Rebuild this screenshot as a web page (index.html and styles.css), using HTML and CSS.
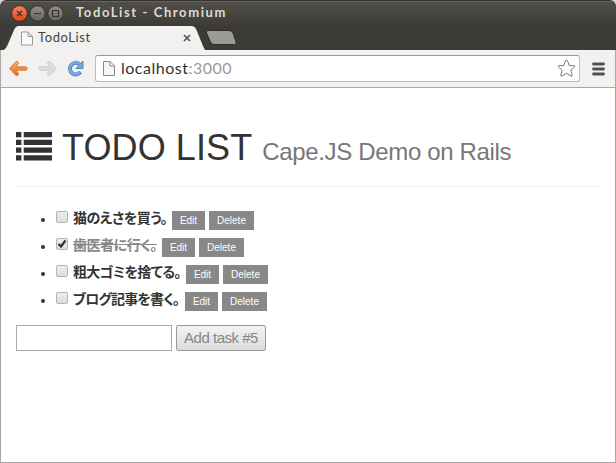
FILE: index.html
```html
<!DOCTYPE html>
<html lang="ja">
<head>
<meta charset="utf-8">
<title>TodoList</title>
<link rel="stylesheet" href="styles.css">
</head>
<body>
<div class="window">
  <header class="frame">
    <div class="titlebar">
      <svg class="controls" width="52" height="18" viewBox="0 0 52 18">
        <defs>
          <linearGradient id="close" x1="0" y1="0" x2="0" y2="1"><stop offset="0" stop-color="#f58560"/><stop offset="1" stop-color="#df4518"/></linearGradient>
          <linearGradient id="grey" x1="0" y1="0" x2="0" y2="1"><stop offset="0" stop-color="#929087"/><stop offset="1" stop-color="#66645d"/></linearGradient>
        </defs>
        <g stroke="#302f2b"><circle cx="8.5" cy="9.500" r="7.900" fill="url(#close)"/><circle cx="26.500" cy="9.500" r="7.700" fill="url(#grey)"/><circle cx="44.500" cy="9.500" r="7.700" fill="url(#grey)"/></g>
        <path d="M6 7l5 5M11 7l-5 5M23 9.500h7M41.500 6.500h6v6h-6z" fill="none" stroke="#36312c" stroke-width="1.200"/>
      </svg>
      <span class="caption">TodoList - Chromium</span>
    </div>
    <div class="tabs">
      <div class="tab">
        <svg class="tab-shape" width="206" height="25" viewBox="0 0 206 25"><path d="M0 25C4 24 5 22 7 18L13 4Q14.500 0 18 0H190Q194 0 195.500 4L202 20Q204 25 206 25Z" fill="#f2f1f0"/></svg>
        <svg class="page-icon" width="12" height="15" viewBox="0 0 12 15"><path d="M.5 1h6.500l4.500 4.500V14H.5zM7 1v4.500h4.500" fill="#fafafa" stroke="#999"/></svg>
        <span class="tab-title">TodoList</span>
        <svg class="tab-close" width="8" height="8" viewBox="0 0 8 8"><path d="M1 1l6 6M7 1L1 7" stroke="#555" stroke-width="1.700"/></svg>
      </div>
      <svg class="new-tab" width="32" height="15" viewBox="0 0 32 15"><path d="M3.500.5H24Q27 .5 28 3L31 12Q31.500 14.500 29.500 14.500H9Q6.500 14.500 5.500 12L1.500 3Q.5.5 3.500.5Z" fill="#9c9b99" stroke="#2d2c28"/></svg>
    </div>
  </header>
  <nav class="toolbar">
    <svg class="nav-icons" width="76" height="20" viewBox="0 0 76 20">
      <defs>
        <linearGradient id="orange" x1="0" y1="0" x2="0" y2="1"><stop offset="0" stop-color="#f9ae68"/><stop offset="1" stop-color="#e46c20"/></linearGradient>
      </defs>
      <path d="M.5 9.500L7 2.500Q9.500 2 9.500 4.500L7 7.800H16.500Q18.200 7.800 18.200 9.500T16.500 11.200H7L9.500 14.500Q9.500 17 7 16.500Z" fill="url(#orange)" stroke="#c9763b" stroke-width=".9"/>
      <path d="M47.500 9.500L41 2.500Q38.500 2 38.500 4.500L41 7.800H31.500Q29.800 7.800 29.800 9.500T31.500 11.200H41L38.500 14.500Q38.500 17 41 16.500Z" fill="#dddcda" stroke="#c9c8c5" stroke-width=".9"/>
      <path d="M70.500 5.200A5.800 5.800 0 1 0 71.500 13" fill="none" stroke="#4f87c4" stroke-width="4"/>
      <path d="M74 2v7.500H67z" fill="#76a9df" stroke="#4f87c4"/>
      <path d="M70.500 5.200A5.800 5.800 0 1 0 71.200 12.700" fill="none" stroke="#79abe0" stroke-width="2.500"/>
    </svg>
    <div class="address">
      <svg class="page-icon" width="12" height="15" viewBox="0 0 12 15"><path d="M.5.5h6.500l4.500 4.500v9.500H.5zM7 .5V5h4.500" fill="#f5f5f5" stroke="#888"/></svg>
      <span class="url">localhost<span class="port">:3000</span></span>
      <svg class="star" width="19" height="19" viewBox="0 0 19 19"><path d="M9.500 1Q10.300 1 10.600 2L12.200 6.500L17 6.700Q18.500 7 17.500 8L13.900 11.200L15.200 16Q15.200 17.700 14 17L9.500 14.300L5 17Q3.800 17.700 3.800 16L5.100 11.200L1.500 8Q.5 7 2 6.700L6.800 6.500L8.400 2Q8.700 1 9.500 1Z" fill="#fff" stroke="#777"/></svg>
    </div>
    <svg class="menu" width="13" height="14" viewBox="0 0 13 14"><path d="M1.500 2h10M1.500 7h10M1.500 12h10" stroke="#505050" stroke-width="2.800" stroke-linecap="round"/></svg>
  </nav>
  <main class="page">
    <h1 class="heading">
      <svg class="list-icon" width="36" height="29" viewBox="0 0 36 29"><path d="M0 0h5.400v5.300H0zM7.700 0H36v5.300H7.700zM0 7.700h5.400v5.300H0zM7.700 7.700H36v5.300H7.700zM0 15.500h5.400v5.300H0zM7.700 15.500H36v5.300H7.700zM0 23.300h5.400v5.300H0zM7.700 23.300H36v5.300H7.700z" fill="#333"/></svg>
      <span class="name">TODO LIST</span>
      <small class="sub">Cape.JS Demo on Rails</small>
    </h1>
    <ul class="tasks">
      <li class="task"><span class="check"></span><span class="label cat">猫のえさを買う。</span><button class="btn">Edit</button><button class="btn delete">Delete</button></li>
      <li class="task"><span class="check"><svg width="12" height="12" viewBox="0 0 12 12"><path d="M2.500 6L5 8.500L9.500 2.500" fill="none" stroke="#333" stroke-width="2.300"/></svg></span><span class="label dentist done"><s class="struck">歯医者に行く。</s></span><button class="btn">Edit</button><button class="btn delete">Delete</button></li>
      <li class="task"><span class="check"></span><span class="label trash">粗大ゴミを捨てる。</span><button class="btn">Edit</button><button class="btn delete">Delete</button></li>
      <li class="task"><span class="check"></span><span class="label blog">ブログ記事を書く。</span><button class="btn">Edit</button><button class="btn delete">Delete</button></li>
    </ul>
    <form class="new-task"><input class="field" type="text"><button class="add" type="button">Add task #5</button></form>
  </main>
</div>
</body>
</html>
```
FILE: styles.css
```css
* { box-sizing: border-box; }
body { margin: 0; background: #d8d8d8; font-family: "Liberation Sans", "Noto Sans CJK JP", sans-serif; }
.window { width: 616px; height: 463px; display: flex; flex-direction: column; overflow: hidden; border-radius: 6px 6px 0 0; background: #fff; }
.frame { height: 50px; background: linear-gradient(#504f49, #3c3b37 26px); border-top: 1px solid #33322e; box-shadow: inset 0 1px #65645e; }
.titlebar { height: 25px; display: flex; padding: 3px 0 0 11px; }
.controls { flex: none; }
.caption { margin-left: 13px; font: bold 13px/17px Lato, sans-serif; letter-spacing: 1.6px; color: #dfdbd2; white-space: nowrap; }
.tabs { display: flex; height: 24px; }
.tab { width: 202px; height: 24px; display: flex; align-items: center; position: relative; padding-left: 21px; }
.tab-shape { position: absolute; left: 1px; top: 0; }
.tab .page-icon, .tab-title, .tab-close { position: relative; }
.tab-title { width: 90px; margin: -2px 0 0 5px; font: 13px/20px Lato, sans-serif; letter-spacing: .6px; color: #444; }
.tab-close { margin-left: 55px; }
.new-tab { margin: 4px 0 0 3px; position: relative; }
.toolbar { height: 38px; flex: none; display: flex; align-items: center; padding-left: 8px; background: #f2f1f0; border: 1px solid #aaa9a7; border-width: 0 1px 1px; }
.nav-icons { flex: none; }
.address { width: 485px; height: 27px; margin-left: 10px; display: flex; align-items: center; padding-left: 7px; background: #fff; border: 1px solid #bbb; border-top-color: #999; border-radius: 3px; }
.url { width: 436px; margin: -1px 0 0 6px; font: 16px/24px Lato, sans-serif; letter-spacing: .5px; color: #333; }
.port { color: #999; }
.menu { margin-left: 12px; }
.page { flex: 1; padding: 40px 15px 0; border: 1px solid #aaa49f; border-top: 0; }
.heading { height: 59px; margin: 0; display: flex; align-items: baseline; border-bottom: 1px solid #eee; color: #333; font-weight: 400; line-height: 40px; }
.list-icon { flex: none; width: 36px; align-self: flex-start; margin-top: 4px; }
.name { margin-left: 10px; font-size: 36px; letter-spacing: .1px; white-space: nowrap; }
.sub { margin-left: 10px; font-size: 24px; letter-spacing: -.34px; color: #777; white-space: nowrap; }
.tasks { margin: 18px 0 0; padding: 0; list-style: none; }
.task { height: 27px; display: flex; align-items: center; padding-left: 25px; }
.task::before { content: ""; width: 4px; height: 4px; margin: 2px 11px 0 0; border-radius: 50%; background: #333; }
.check { width: 12px; height: 12px; flex: none; margin: -3px 5px 0 0; display: flex; align-items: center; justify-content: center; background: linear-gradient(#eee, #ddd); border: 1px solid #b3b3b3; border-radius: 2px; }
.check svg { flex: none; }
.label { margin-top: -3px; font: bold 14px/20px "Noto Sans CJK JP", sans-serif; font-feature-settings: "palt"; letter-spacing: -.45px; color: #333; white-space: nowrap; }
.cat { width: 99px; }
.dentist { width: 89px; }
.trash { width: 113px; letter-spacing: -.7px; }
.blog { width: 112px; letter-spacing: -.8px; }
.done { color: #888; }
.struck { text-decoration: line-through 1px; }
.btn { width: 33px; height: 19px; margin: 3px 4px 0 0; padding: 0; border: 0; background: #888; color: #fff; font: 10px/19px "Liberation Sans", sans-serif; }
.delete { width: 45px; }
.new-task { display: flex; gap: 4px; margin-top: 12px; }
.field { width: 156px; height: 26px; border: 1px solid #aaa; padding: 2px 4px; background: #fff; }
.add { width: 90px; height: 26px; padding: 0; border: 1px solid #999; border-radius: 2px; background: linear-gradient(#f3f3f3, #dcdcdc); color: #888; font: 15px/22px "Liberation Sans", sans-serif; letter-spacing: -.48px; }
```
